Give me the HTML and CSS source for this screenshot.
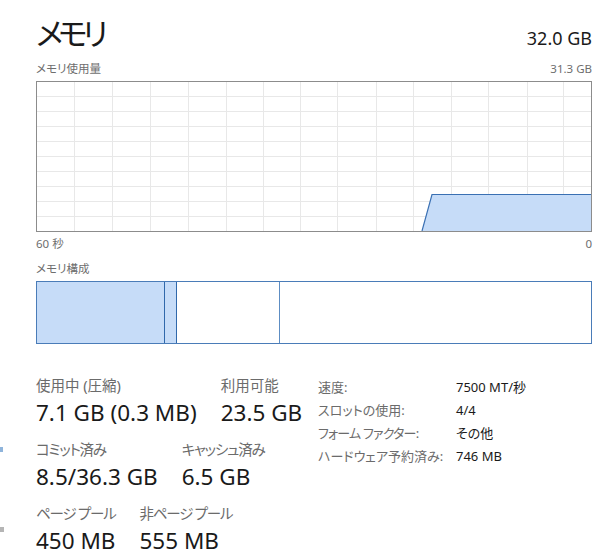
FILE: index.html
```html
<!DOCTYPE html>
<html lang="ja">
<head>
<meta charset="utf-8">
<title>メモリ</title>
<link rel="stylesheet" href="styles.css">
</head>
<body>
<div class="edge-mark edge-blue"></div>
<div class="edge-mark edge-gray"></div>
<main class="page">
  <header class="head">
    <h1 class="title">メモリ</h1>
    <div class="total">32.0 GB</div>
  </header>
  <div class="caption-row">
    <span>メモリ使用量</span>
    <span>31.3 GB</span>
  </div>
  <div class="graph">
    <svg class="graph-svg" width="556" height="151" viewBox="0 0 556 151">
      <g class="grid">
        <line x1="38.5" y1="0" x2="38.5" y2="151"/>
        <line x1="76.5" y1="0" x2="76.5" y2="151"/>
        <line x1="114.5" y1="0" x2="114.5" y2="151"/>
        <line x1="152.5" y1="0" x2="152.5" y2="151"/>
        <line x1="190.5" y1="0" x2="190.5" y2="151"/>
        <line x1="227.5" y1="0" x2="227.5" y2="151"/>
        <line x1="264.5" y1="0" x2="264.5" y2="151"/>
        <line x1="301.5" y1="0" x2="301.5" y2="151"/>
        <line x1="340.5" y1="0" x2="340.5" y2="151"/>
        <line x1="377.5" y1="0" x2="377.5" y2="151"/>
        <line x1="415.5" y1="0" x2="415.5" y2="151"/>
        <line x1="452.5" y1="0" x2="452.5" y2="151"/>
        <line x1="491.5" y1="0" x2="491.5" y2="151"/>
        <line x1="527.5" y1="0" x2="527.5" y2="151"/>
        <line x1="0" y1="15.5" x2="556" y2="15.5"/>
        <line x1="0" y1="30.5" x2="556" y2="30.5"/>
        <line x1="0" y1="45.5" x2="556" y2="45.5"/>
        <line x1="0" y1="60.5" x2="556" y2="60.5"/>
        <line x1="0" y1="75.5" x2="556" y2="75.5"/>
        <line x1="0" y1="90.5" x2="556" y2="90.5"/>
        <line x1="0" y1="105.5" x2="556" y2="105.5"/>
        <line x1="0" y1="120.5" x2="556" y2="120.5"/>
        <line x1="0" y1="135.5" x2="556" y2="135.5"/>
      </g>
      <polygon class="area" points="386,150 396,113.5 556,113.5 556,150"/>
      <polyline class="area-line" points="386,150 396,113.5 556,113.5"/>
    </svg>
  </div>
  <div class="axis-row">
    <span>60 秒</span>
    <span>0</span>
  </div>
  <div class="caption-row comp-caption">
    <span>メモリ構成</span>
  </div>
  <div class="composition">
    <div class="seg seg-used"></div>
    <div class="seg seg-mod"></div>
    <div class="seg seg-standby"></div>
    <div class="seg seg-free"></div>
  </div>
  <section class="stats">
    <div class="stats-left">
      <div class="stat-row">
        <div class="stat"><div class="label">使用中 (圧縮)</div><div class="value">7.1 GB (0.3 MB)</div></div>
        <div class="stat"><div class="label">利用可能</div><div class="value">23.5 GB</div></div>
      </div>
      <div class="stat-row">
        <div class="stat"><div class="label label-kana">コミット済み</div><div class="value">8.5/36.3 GB</div></div>
        <div class="stat"><div class="label label-kana">キャッシュ済み</div><div class="value">6.5 GB</div></div>
      </div>
      <div class="stat-row">
        <div class="stat"><div class="label label-kana">ページ プール</div><div class="value">450 MB</div></div>
        <div class="stat"><div class="label label-kana">非ページ プール</div><div class="value">555 MB</div></div>
      </div>
    </div>
    <dl class="props">
      <dt>速度:</dt><dd>7500 MT/秒</dd>
      <dt>スロットの使用:</dt><dd>4/4</dd>
      <dt class="dt-kana">フォーム ファクター:</dt><dd>その他</dd>
      <dt>ハードウェア予約済み:</dt><dd>746 MB</dd>
    </dl>
  </section>
</main>
</body>
</html>
```

FILE: styles.css
```css
html, body {
  margin: 0;
  padding: 0;
  background: #ffffff;
}
body {
  font-family: "Noto Sans", "Noto Sans CJK JP", sans-serif;
  font-feature-settings: "palt";
  color: #1a1a1a;
  width: 600px;
  height: 559px;
  overflow: hidden;
  position: relative;
}
.page {
  padding: 14px 8px 0 36px;
}
.head {
  display: flex;
  justify-content: space-between;
  align-items: baseline;
  height: 42px;
}
.title {
  margin: 0;
  font-weight: 400;
  font-size: 31px;
  line-height: 38px;
  letter-spacing: -5px;
}
.total {
  font-size: 18px;
  line-height: 24px;
}
.caption-row {
  display: flex;
  justify-content: space-between;
  font-size: 11.5px;
  line-height: 18px;
  color: #6e6e6e;
  margin-top: 4px;
  height: 21px;
}
.graph {
  width: 556px;
  height: 151px;
  border: 1px solid #8c8c8c;
  box-sizing: border-box;
  position: relative;
  overflow: hidden;
}
.graph-svg {
  display: block;
  margin: -1px;
}
.grid line {
  stroke: #e8e8e8;
  stroke-width: 1;
}
.area {
  fill: #c6dcf8;
}
.area-line {
  fill: none;
  stroke: #3a70b3;
  stroke-width: 1.2;
}
.axis-row {
  display: flex;
  justify-content: space-between;
  font-size: 11.5px;
  line-height: 20px;
  color: #6e6e6e;
  height: 20px;
  margin-top: 2px;
}
.comp-caption {
  margin-top: 6px;
  height: 21px;
}
.composition {
  display: flex;
  width: 556px;
  height: 63px;
  border: 1px solid #4a7cb8;
  box-sizing: border-box;
}
.seg {
  height: 100%;
  box-sizing: border-box;
}
.seg-used {
  width: 128px;
  background: #c6dcf8;
  border-right: 1px solid #2f68ab;
}
.seg-mod {
  width: 12px;
  background: #c6dcf8;
  border-right: 1px solid #2f68ab;
}
.seg-standby {
  width: 103px;
  border-right: 1px solid #5d8dc3;
}
.seg-free {
  flex: 1;
}
.stats {
  display: flex;
  margin-top: 31px;
}
.stats-left {
  width: 282px;
  display: flex;
  flex-direction: column;
  gap: 11px;
}
.stat-row {
  display: flex;
  gap: 24px;
}
.label {
  font-size: 14.5px;
  line-height: 20px;
  color: #6b6b6b;
  white-space: nowrap;
}
.label-kana {
  letter-spacing: -1.2px;
}
.value {
  font-size: 22.5px;
  line-height: 30px;
  margin-top: 3px;
  color: #1a1a1a;
  white-space: nowrap;
}
.props {
  margin: 0;
  display: grid;
  grid-template-columns: 138px auto;
  grid-auto-rows: 23px;
  font-size: 13px;
  line-height: 23px;
  padding-top: 1px;
}
.props dt {
  color: #6b6b6b;
  white-space: nowrap;
}
.props .dt-kana {
  letter-spacing: -0.8px;
}
.props dd {
  margin: 0;
  color: #1a1a1a;
  white-space: nowrap;
}
.edge-mark {
  position: absolute;
  left: 0;
  width: 3px;
  height: 5px;
}
.edge-blue {
  top: 447px;
  background: #8fb4db;
}
.edge-gray {
  top: 527px;
  width: 4px;
  background: #b5b5b5;
}
```
